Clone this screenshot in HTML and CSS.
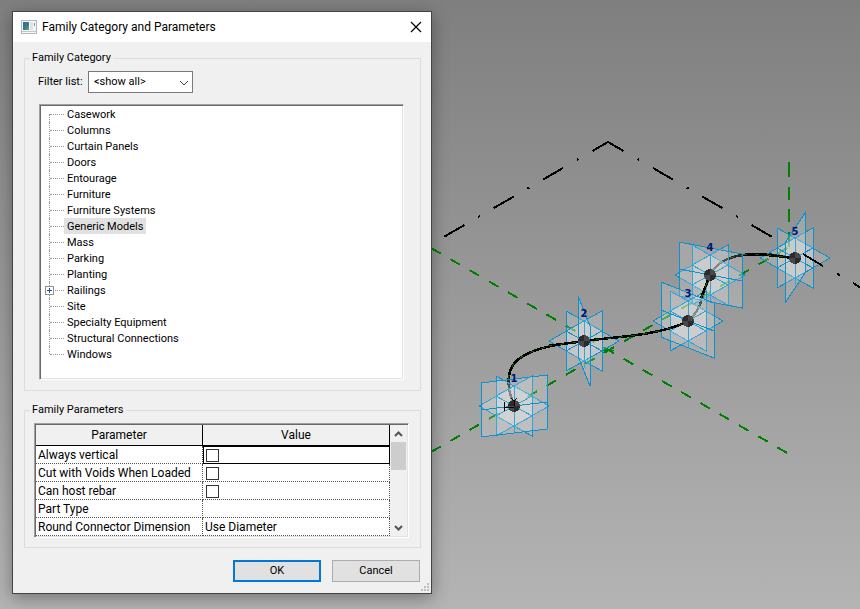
FILE: index.html
```html
<!DOCTYPE html>
<html lang="en">
<head>
<meta charset="utf-8">
<title>Family Category and Parameters</title>
<link rel="stylesheet" href="styles.css">
</head>
<body>
<svg class="scene" viewBox="0 0 860 609" preserveAspectRatio="xMinYMin slice" role="img" aria-label="3D view">
  <defs>
    <g id="planes" class="plane">
      <path d="M-35 0L0-20L35 0L0 20Z"/>
      <path d="M-18-30L18-10V30L-18 10Z"/>
      <path d="M18-30L-18-10V30L18 10Z"/>
      <path d="M0-20V27M-18-10L18 10M-18 10L18-10"/>
    </g>
    <g id="node">
      <circle r="6" fill="#2b2b2b"/>
      <path d="M0 0V-6A6 6 0 0 1 6 0ZM0 0V6A6 6 0 0 1-6 0Z" fill="#484848"/>
    </g>
  </defs>
  <g class="axis">
    <path d="M608 142L442 238"/>
    <path d="M608 142L774 238"/>
    <path d="M837 274L840 275M853 283L861 288" class="solid"/>
  </g>
  <g class="reference">
    <path d="M431 248L789 454"/>
    <path d="M431 452L789 247"/>
    <path d="M789 162V177M789 187V200M789 209V222M789 232V247" class="solid"/>
    <path d="M603 347L614 353M603 353L614 347M603 350H614" class="solid cross"/>
  </g>
  <path class="spline" d="M513 402C507 388 505 368 520 358C538 346 562 344 584 341C612 337 660 336 688 321C702 310 703 292 710 275C720 255 745 254 760 254C775 254 785 257 795 258"/>
  <path class="spline-core" d="M513 402C507 388 505 368 520 358C538 346 562 344 584 341C612 337 660 336 688 321C702 310 703 292 710 275C720 255 745 254 760 254C775 254 785 257 795 258"/>

  <use href="#planes" x="514" y="406"/>
  <path class="plane" d="M481 383L547 375V429L481 437ZM481 410L547 402"/>
  <use href="#planes" x="584" y="341"/>
  <path class="plane" d="M578 296L590 326V386L578 356Z"/>
  <use href="#planes" x="710" y="275"/>
  <path class="plane" d="M679 242L742 254V308L679 296ZM679 269L742 281"/>
  <use href="#planes" x="688" y="321"/>
  <path class="plane" d="M661 282L714 303V358L661 337ZM661 310L714 331"/>
  <use href="#planes" x="795" y="258"/>
  <path class="plane" d="M805 213V273L785 303V243Z"/>

  <!-- Parts of the spline and axis that pass in front of the work planes -->
  <path class="spline" d="M548 346C560 344 572 343 584 341C612 337 660 336 688 321M701 298C704 291 707 282 710 275M743 255C765 253 780 257 795 258"/>
  <path class="spline-core" d="M548 346C560 344 572 343 584 341C612 337 660 336 688 321M701 298C704 291 707 282 710 275M743 255C765 253 780 257 795 258"/>
  <path d="M803 254L823 266" stroke="#000" stroke-width="2" fill="none"/>

  <use href="#node" x="514" y="406"/>
  <use href="#node" x="584" y="341"/>
  <use href="#node" x="710" y="275"/>
  <use href="#node" x="688" y="321"/>
  <use href="#node" x="795" y="258"/>
  <path d="M504 402V411M504 407H514M511 398L514 401L517 398M514 401V406" fill="none" stroke="#000"/>
  <text x="514" y="382">1</text>
  <text x="584" y="317">2</text>
  <text x="710" y="251">4</text>
  <text x="688" y="297">3</text>
  <text x="795" y="235">5</text>
</svg>

<main class="desktop">
  <form class="dialog" aria-labelledby="dialog-title">
    <header class="titlebar">
      <svg class="app-icon" width="16" height="14" viewBox="0 0 16 14" aria-hidden="true">
        <rect x=".5" y=".5" width="15" height="13" fill="#f4f6f8" stroke="#b4b8be"/>
        <rect x="2" y="2" width="6" height="8" fill="#397a86"/>
        <path d="M2 2H6L2 8Z" fill="#3d6a9c"/>
        <path d="M4 10L8 5V10Z" fill="#4b9a78"/>
        <path d="M9 2H12V10H9Z" fill="#dfe3e8"/>
        <path d="M13 3H14V6H13Z" fill="#6fa08a"/>
        <path d="M1 11.500H15" stroke="#c3c7cc"/>
      </svg>
      <h1 id="dialog-title">Family Category and Parameters</h1>
      <button type="button" class="close" aria-label="Close">
        <svg width="12" height="12" viewBox="0 0 12 12"><path d="M1 1L11 11M11 1L1 11" fill="none" stroke="#000" stroke-width="1.2"/></svg>
      </button>
    </header>

    <div class="content">
      <fieldset class="group">
        <legend>Family Category</legend>
        <div class="filter">
          <label for="filter">Filter list:</label>
          <span class="select">
            <select id="filter"><option>&lt;show all&gt;</option></select>
            <svg width="10" height="6" viewBox="0 0 10 6" aria-hidden="true"><path d="M1 1L5 5L9 1" fill="none" stroke="#444"/></svg>
          </span>
        </div>
        <ul class="tree">
          <li><span>Casework</span></li>
          <li><span>Columns</span></li>
          <li><span>Curtain Panels</span></li>
          <li><span>Doors</span></li>
          <li><span>Entourage</span></li>
          <li><span>Furniture</span></li>
          <li><span>Furniture Systems</span></li>
          <li><span class="selected">Generic Models</span></li>
          <li><span>Mass</span></li>
          <li><span>Parking</span></li>
          <li><span>Planting</span></li>
          <li><button type="button" class="expander" aria-label="Expand Railings"></button><span>Railings</span></li>
          <li><span>Site</span></li>
          <li><span>Specialty Equipment</span></li>
          <li><span>Structural Connections</span></li>
          <li><span>Windows</span></li>
        </ul>
      </fieldset>

      <fieldset class="group">
        <legend>Family Parameters</legend>
        <div class="grid-frame">
          <table class="parameters">
            <thead><tr><th scope="col">Parameter</th><th scope="col">Value</th></tr></thead>
            <tbody>
              <tr><td><label for="p1">Always vertical</label></td><td class="current"><input type="checkbox" id="p1"></td></tr>
              <tr><td><label for="p2">Cut with Voids When Loaded</label></td><td><input type="checkbox" id="p2"></td></tr>
              <tr><td><label for="p3">Can host rebar</label></td><td><input type="checkbox" id="p3"></td></tr>
              <tr><td>Part Type</td><td></td></tr>
              <tr><td>Round Connector Dimension</td><td>Use Diameter</td></tr>
            </tbody>
          </table>
          <div class="scrollbar">
            <button type="button" aria-label="Scroll up"><svg width="9" height="6" viewBox="0 0 9 6"><path d="M1 5L4.500 1.500L8 5" fill="none" stroke="#555" stroke-width="2"/></svg></button>
            <div class="track"><div class="thumb"></div></div>
            <button type="button" aria-label="Scroll down"><svg width="9" height="6" viewBox="0 0 9 6"><path d="M1 1L4.500 4.500L8 1" fill="none" stroke="#555" stroke-width="2"/></svg></button>
          </div>
        </div>
      </fieldset>

      <div class="actions">
        <button type="submit" class="default">OK</button>
        <button type="button">Cancel</button>
      </div>
    </div>
    <svg class="grip" width="8" height="8" viewBox="0 0 8 8" aria-hidden="true"><path d="M6 0h2v2H6zM3 3h2v2H3zM6 3h2v2H6zM0 6h2v2H0zM3 6h2v2H3zM6 6h2v2H6z" fill="#bdbdbd"/></svg>
  </form>
</main>
</body>
</html>
```

FILE: styles.css
```css
* {
  box-sizing: border-box;
}

body {
  margin: 0;
  min-height: 100vh;
  background: linear-gradient(#7f7f7f, #b4b4b4) fixed;
  font: 11px/16px Roboto, sans-serif;
  color: #000;
}

button, select {
  font: inherit;
  color: inherit;
}

/* 3D view behind the dialog */
.scene {
  position: absolute;
  inset: 0;
  width: 100%;
  height: 100%;
  shape-rendering: crispEdges;
}

.axis path,
.reference path {
  fill: none;
  stroke-width: 2;
}

.axis path {
  stroke: #000;
  stroke-dasharray: 23 16 2 16;
  stroke-dashoffset: 5;
}

.reference path {
  stroke: #008000;
  stroke-dasharray: 11.2 11;
}

.scene .solid {
  stroke-dasharray: none;
}

.reference .cross {
  stroke-width: 1;
}

.spline {
  fill: none;
  stroke: #000;
  stroke-width: 2.5;
}

.spline-core {
  fill: none;
  stroke: #0a5a0a;
  stroke-width: 1;
  stroke-dasharray: 4 8;
}

.plane {
  fill: rgba(255, 255, 255, 0.17);
  stroke: #0a93cf;
  stroke-width: 1;
}

.scene text {
  font: bold 10px "DejaVu Sans", sans-serif;
  text-anchor: middle;
  fill: #00147a;
}

/* Dialog window */
.desktop {
  position: relative;
  padding: 11px 12px 15px;
}

.dialog {
  position: relative;
  max-width: 420px;
  border: 1px solid #444;
  background: #f0f0f0;
  box-shadow: 0 4px 16px rgba(0, 0, 0, 0.35);
}

.titlebar {
  display: flex;
  align-items: center;
  height: 30px;
  padding: 0 9px 0 8px;
  background: #fff;
}

.titlebar h1 {
  flex: 1;
  margin: 0 0 0 5px;
  font: 12px/16px Roboto, sans-serif;
}

.close {
  display: flex;
  padding: 0;
  border: 0;
  background: none;
}

.content {
  padding: 8px 10px 11px 11px;
}

.group {
  min-width: 0;
  margin: 0;
  padding: 5px 5px 9px;
  border: 1px solid #dcdcdc;
}

.group + .group {
  margin-top: 11px;
}

.group legend {
  padding: 0 2px;
}

.filter {
  display: flex;
  align-items: center;
  justify-content: space-between;
  width: 155px;
  margin-left: 8px;
}

.select {
  position: relative;
  width: 105px;
}

.select select {
  display: block;
  width: 100%;
  height: 22px;
  padding: 0 5px;
  border: 1px solid #7a7a7a;
  border-radius: 0;
  background: #fff;
  appearance: none;
}

.select svg {
  position: absolute;
  top: 9px;
  right: 4px;
  pointer-events: none;
}

.tree,
.grid-frame {
  border: 1px solid #a0a0a0;
  border-right-color: #fff;
  border-bottom-color: #fff;
  box-shadow: inset 1px 1px #696969, inset -1px -1px #e3e3e3;
}

.tree {
  height: 276px;
  margin: 11px 11px 1px 9px;
  padding: 1px 1px 1px 9px;
  list-style: none;
  line-height: 18px;
  background: #fff;
}

.tree li {
  position: relative;
  display: flex;
  height: 16px;
  padding-left: 15px;
}

.tree li::before {
  content: "";
  position: absolute;
  left: 0;
  top: 0;
  height: 16px;
  border-left: 1px dotted #999;
}

.tree li:first-child::before {
  top: 8px;
  height: 8px;
}

.tree li:last-child::before {
  height: 8px;
}

.tree li::after {
  content: "";
  position: absolute;
  left: 1px;
  top: 8px;
  width: 14px;
  border-top: 1px dotted #999;
}

.tree span {
  height: 16px;
  padding: 0 3px;
}

.tree .selected {
  background: #e1e1e1;
}

.expander {
  position: absolute;
  z-index: 1;
  left: -4px;
  top: 4px;
  width: 9px;
  height: 9px;
  padding: 0;
  border: 1px solid #919191;
  background:
    linear-gradient(#2b4a9b, #2b4a9b) center / 5px 1px no-repeat,
    linear-gradient(#2b4a9b, #2b4a9b) center / 1px 5px no-repeat,
    #fff;
}

.grid-frame {
  display: flex;
  margin: 0 6px 0 4px;
  padding: 1px;
}

.parameters {
  flex: 1;
  border-collapse: separate;
  border-spacing: 0;
  table-layout: fixed;
  font: 12px/16px Roboto, sans-serif;
}

.parameters th {
  height: 21px;
  padding: 0;
  border-right: 1px solid #000;
  border-bottom: 1px solid #000;
  font-weight: normal;
}

.parameters th:first-child {
  width: 167px;
}

.parameters td {
  height: 18px;
  padding: 0 2px;
  border-right: 1px dotted #555;
  border-bottom: 1px dotted #555;
  background: #fff;
  white-space: nowrap;
}

.parameters .current {
  outline: 1px solid #000;
  outline-offset: -1px;
}

.parameters input {
  display: block;
  width: 13px;
  height: 13px;
  margin: 2px 0 0 1px;
  border: 1px solid #333;
  background: #fff;
  appearance: none;
}

.scrollbar {
  display: flex;
  flex-direction: column;
  width: 17px;
}

.scrollbar button {
  display: flex;
  align-items: center;
  justify-content: center;
  height: 17px;
  padding: 0;
  border: 0;
  background: none;
}

.track {
  flex: 1;
}

.thumb {
  width: 15px;
  height: 28px;
  margin: 0 auto;
  background: #cdcdcd;
}

.actions {
  display: flex;
  justify-content: flex-end;
  gap: 11px;
  margin-top: 12px;
  padding-right: 1px;
}

.actions button {
  width: 88px;
  height: 22px;
  padding: 0;
  border: 1px solid #adadad;
  background: #e1e1e1;
}

.actions .default {
  border: 2px solid #0078d7;
}

.grip {
  position: absolute;
  right: 2px;
  bottom: 2px;
}
```
